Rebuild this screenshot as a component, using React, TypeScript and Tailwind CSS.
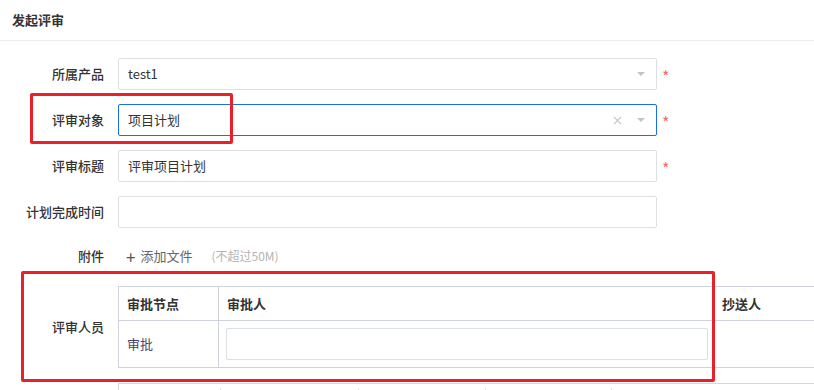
import { X } from "lucide-react";

const font = { fontFamily: '"Noto Sans CJK SC", "Liberation Sans", sans-serif' };

function Caret() {
  return (
    <svg width="10" height="6" viewBox="0 0 10 6" className="shrink-0">
      <path d="M1 1h8L5 5z" fill="#c0c4cc" />
    </svg>
  );
}

function Row({ label, children, required, h = "h-8" }: { label: string; children: React.ReactNode; required?: boolean; h?: string }) {
  return (
    <div className={`flex items-center ${h}`}>
      <div className="w-[104px] text-right text-[13px] font-medium text-[#333]">{label}</div>
      <div className="ml-[14px] flex items-center">
        {children}
        <span className={`ml-[5px] pt-[4px] text-[16px] leading-none text-[#f56c6c] ${required ? "" : "invisible"}`}>*</span>
      </div>
    </div>
  );
}

export default function App() {
  return (
    <div className="relative h-[390px] w-[814px] overflow-hidden bg-white" style={font}>
      <div className="flex h-[41px] items-center border-b border-[#ebebeb] pl-3 text-[13px] font-bold text-[#333]">
        发起评审
      </div>

      <div className="flex flex-col gap-[14px] pt-[17px]">
        <Row label="所属产品" required>
          <div className="flex h-8 w-[539px] items-center rounded-[2px] border border-[#dcdfe6] pl-[9px] pr-[10px] text-[13px] text-[#333]">
            <span className="flex-1">test1</span>
            <Caret />
          </div>
        </Row>
        <Row label="评审对象" required>
          <div className="flex h-8 w-[539px] items-center rounded-[2px] border border-[#1a6ee8] pl-[9px] pr-[10px] text-[13px] text-[#333]">
            <span className="flex-1">项目计划</span>
            <X size={13} strokeWidth={2} className="mr-[12px] text-[#c8c8c8]" />
            <Caret />
          </div>
        </Row>
        <Row label="评审标题" required>
          <div className="flex h-8 w-[539px] items-center rounded-[2px] border border-[#dcdfe6] pl-[9px] text-[13px] text-[#333]">
            评审项目计划
          </div>
        </Row>
        <Row label="计划完成时间">
          <div className="h-8 w-[539px] rounded-[2px] border border-[#dcdfe6]" />
        </Row>
        <Row label="附件" h="h-[28px]">
          <div className="flex items-center pl-[8px] text-[13px]">
            <span className="mr-[5px] text-[17px] leading-none text-[#555]">+</span>
            <span className="text-[#666]">添加文件</span>
            <span className="ml-[19px] text-[12px] text-[#b4b4b4]">(不超过50M)</span>
          </div>
        </Row>

        <div className="mt-[2px] flex items-center">
          <div className="w-[104px] text-right text-[13px] font-medium text-[#333]">评审人员</div>
          <div className="ml-[14px] flex-1 overflow-hidden">
            <div className="w-[760px] border-l border-t border-[#d0d3de] text-[13px]">
              <div className="flex h-[34px] border-b border-[#d0d3de] font-semibold text-[#333]">
                <div className="flex w-[100px] items-center border-r border-[#d0d3de] pl-[8px]">审批节点</div>
                <div className="flex w-[494px] items-center border-r border-[#d0d3de] pl-[8px]">审批人</div>
                <div className="flex flex-1 items-center pl-[9px]">抄送人</div>
              </div>
              <div className="flex h-[47px] border-b border-[#d0d3de] text-[#4a3f6b]">
                <div className="flex w-[100px] items-center border-r border-[#d0d3de] pl-[8px]">审批</div>
                <div className="flex w-[494px] items-center border-r border-[#d0d3de] pl-[7px]">
                  <div className="h-8 w-[482px] rounded-[2px] border border-[#dcdfe6]" />
                </div>
                <div className="flex-1" />
              </div>
            </div>
          </div>
        </div>

        <div className="mt-[1px] flex pl-[118px]">
          <div className="flex h-[10px] flex-1 border-l border-t border-[#d6d8e0]">
            <div className="mt-[4px] w-[102px] border-r border-[#e4e4e4]" />
            <div className="mt-[4px] w-[138px] border-r border-[#e4e4e4]" />
            <div className="mt-[4px] w-[127px] border-r border-[#e4e4e4]" />
            <div className="mt-[4px] w-[126px] border-r border-[#e4e4e4]" />
          </div>
        </div>
      </div>

      {/* annotation boxes */}
      <div className="pointer-events-none absolute left-[30px] top-[93px] h-[51px] w-[203px] rounded-[2px] border-[3px] border-[#e8202a]" />
      <div className="pointer-events-none absolute left-[21px] top-[271px] h-[111px] w-[694px] rounded-[2px] border-[3px] border-[#e8202a]" />
    </div>
  );
}
